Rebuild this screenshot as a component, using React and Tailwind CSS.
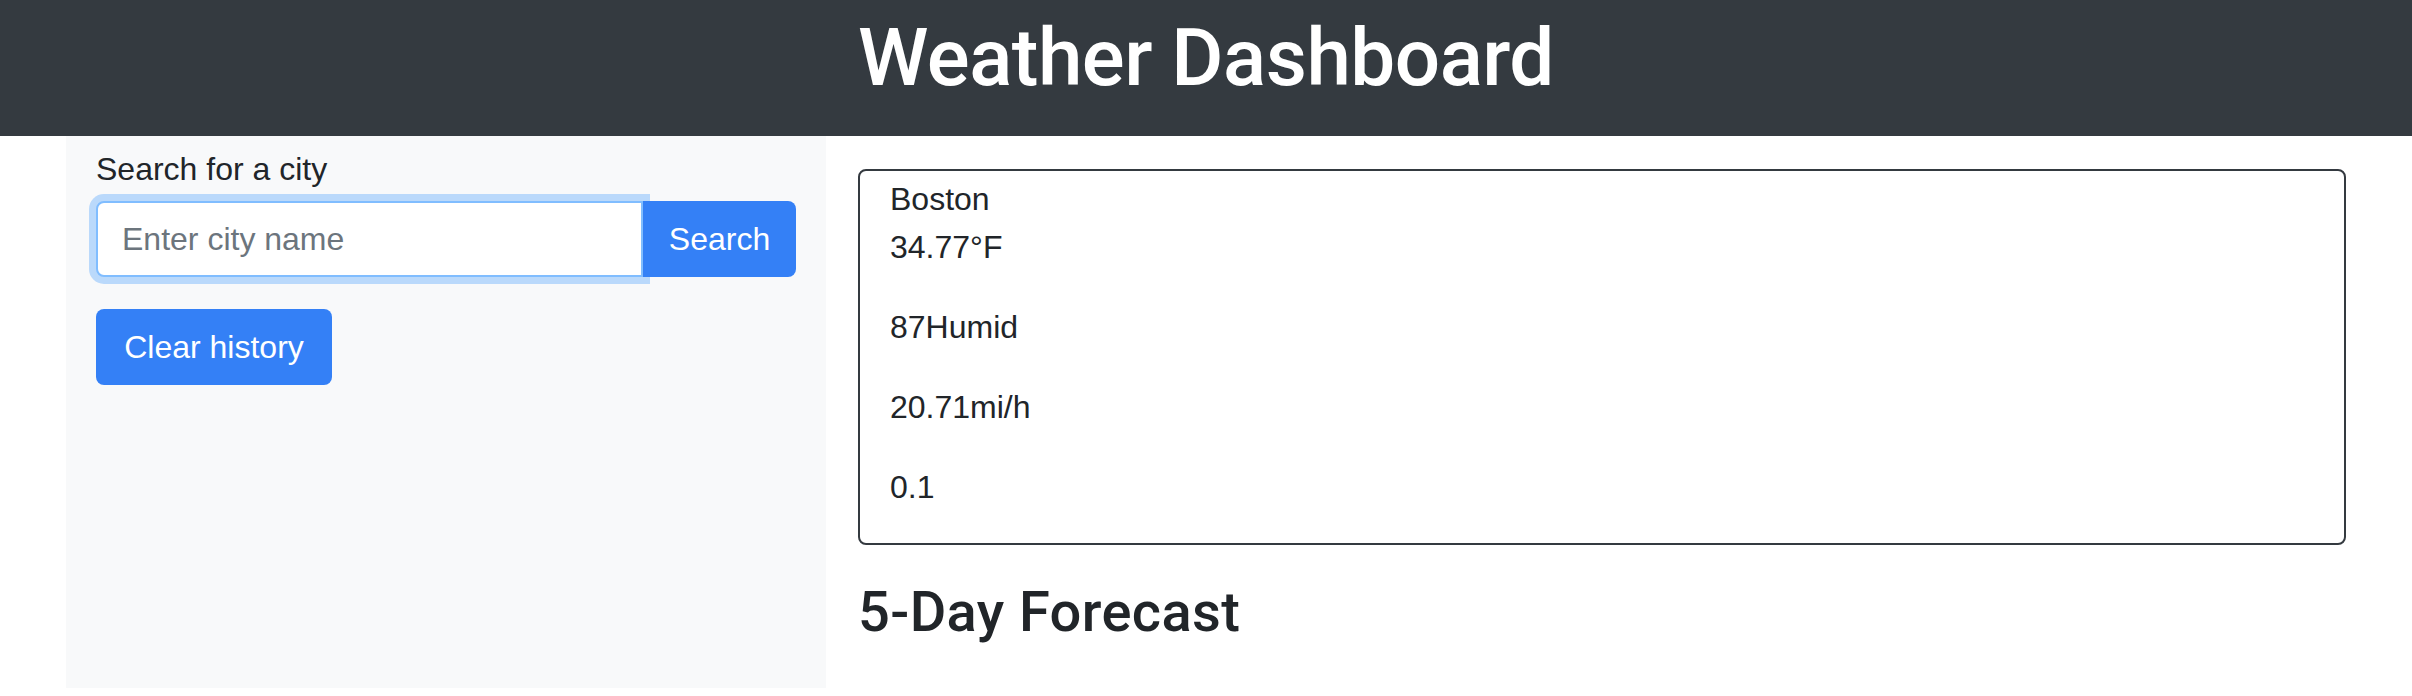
import React from 'react';

const weather = {
  city: 'Boston',
  temp: '34.77°F',
  humidity: '87Humid',
  wind: '20.71mi/h',
  uv: '0.1'
};

export default function App() {
  return (
    <div className="bg-white text-[#212529] font-['Liberation_Sans',Arial,sans-serif]">
      <header className="h-[136px] bg-[#343a40] pt-[10px] text-center">
        <h1 className="font-['Roboto',Arial,sans-serif] font-medium text-[80px] leading-[96px] tracking-[-0.5px] text-white">Weather Dashboard</h1>
      </header>

      <div className="mx-[66px] flex">
        <aside className="w-[760px] h-[552px] shrink-0 bg-[#f8f9fa] px-[30px] pt-[9px]">
          <label className="block text-[32px] leading-[48px] mb-[8px]">Search for a city</label>
          <div className="flex">
            <input
              type="text"
              placeholder="Enter city name"
              className="w-[547px] h-[76px] border-2 border-[#80bdff] rounded-l-[8px] bg-white px-[24px] text-[32px] outline-none shadow-[0_0_0_7px_rgba(0,123,255,0.25)] placeholder:text-[#6c757d]"
            />
            <button className="w-[153px] h-[76px] rounded-r-[8px] bg-[#3480f6] text-[32px] text-white">Search</button>
          </div>
          <button className="mt-[32px] w-[236px] h-[76px] rounded-[8px] bg-[#3480f6] text-[32px] text-white">Clear history</button>
        </aside>

        <main className="flex-1 pl-[32px] pt-[33px]">
          <div className="border-2 border-[#343a40] rounded-[8px] pl-[30px] pt-[4px] text-[32px] leading-[48px]">
            <div>{weather.city}</div>
            <p className="mb-[32px]">{weather.temp}</p>
            <p className="mb-[32px]">{weather.humidity}</p>
            <p className="mb-[32px]">{weather.wind}</p>
            <p className="mb-[32px]">{weather.uv}</p>
          </div>
          <h3 className="mt-[34px] font-['Roboto',Arial,sans-serif] font-medium text-[56px] leading-[67px] tracking-[0.4px]">5-Day Forecast</h3>
        </main>
      </div>
    </div>
  );
}
